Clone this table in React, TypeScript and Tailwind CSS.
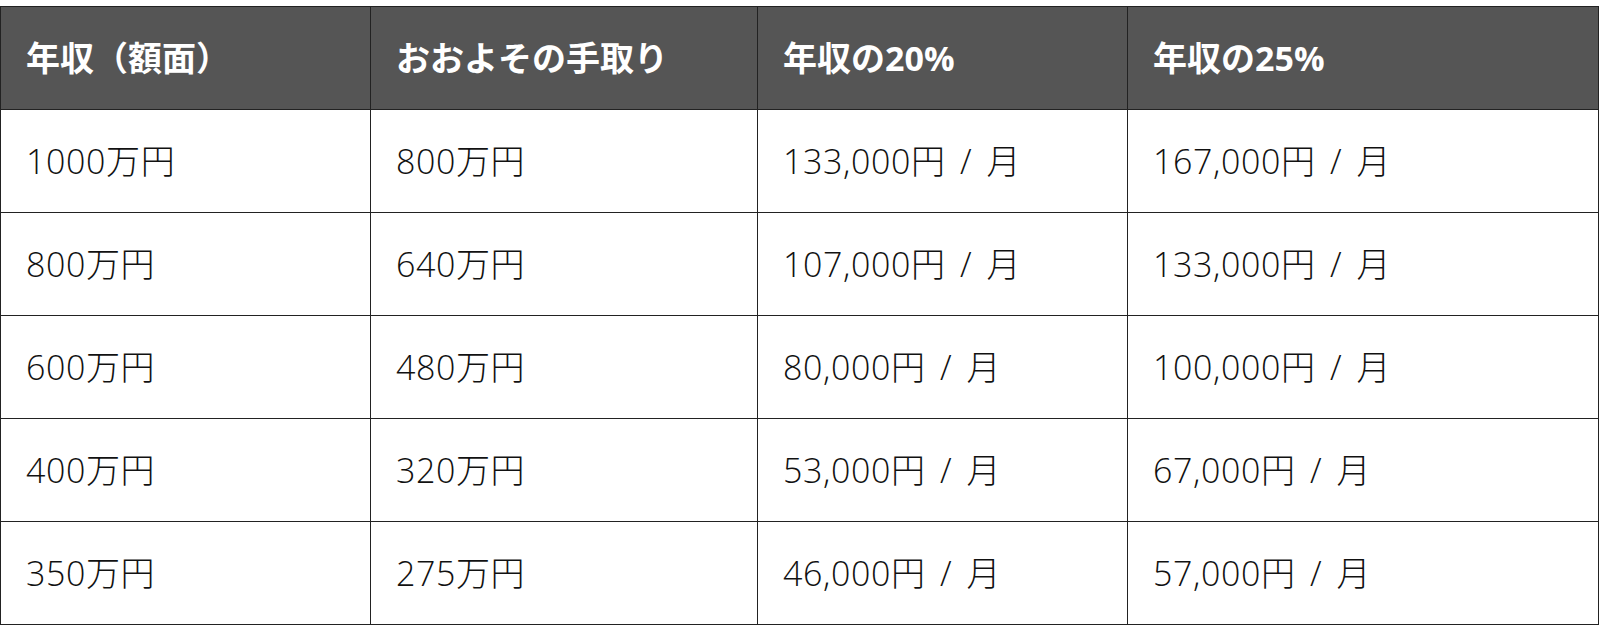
import React from 'react';

const HEADERS = ['年収（額面）', 'おおよその手取り', '年収の20%', '年収の25%'];

const ROWS = [
  ['1000万円', '800万円', '133,000円 / 月', '167,000円 / 月'],
  ['800万円', '640万円', '107,000円 / 月', '133,000円 / 月'],
  ['600万円', '480万円', '80,000円 / 月', '100,000円 / 月'],
  ['400万円', '320万円', '53,000円 / 月', '67,000円 / 月'],
  ['350万円', '275万円', '46,000円 / 月', '57,000円 / 月'],
];

export default function App() {
  return (
    <div className="bg-white w-[1600px] h-[627px] pt-[6px] font-['Open_Sans','Noto_Sans_CJK_JP',sans-serif]">
      <table className="w-[1598px] table-fixed border-collapse">
        <colgroup>
          <col className="w-[370px]" />
          <col className="w-[387px]" />
          <col className="w-[370px]" />
          <col className="w-[471px]" />
        </colgroup>
        <thead>
          <tr className="h-[103px] bg-[#555555]">
            {HEADERS.map((h) => (
              <th
                key={h}
                className="border border-[#222] px-[25px] text-left text-[34px] font-bold text-white"
              >
                {h}
              </th>
            ))}
          </tr>
        </thead>
        <tbody>
          {ROWS.map((row, i) => (
            <tr key={i} className="h-[103px]">
              {row.map((cell, j) => (
                <td
                  key={j}
                  className="border border-[#222] px-[25px] text-left text-[34px] font-light text-[#111] tracking-[0.6px] [word-spacing:5px]"
                >
                  {cell}
                </td>
              ))}
            </tr>
          ))}
        </tbody>
      </table>
    </div>
  );
}
